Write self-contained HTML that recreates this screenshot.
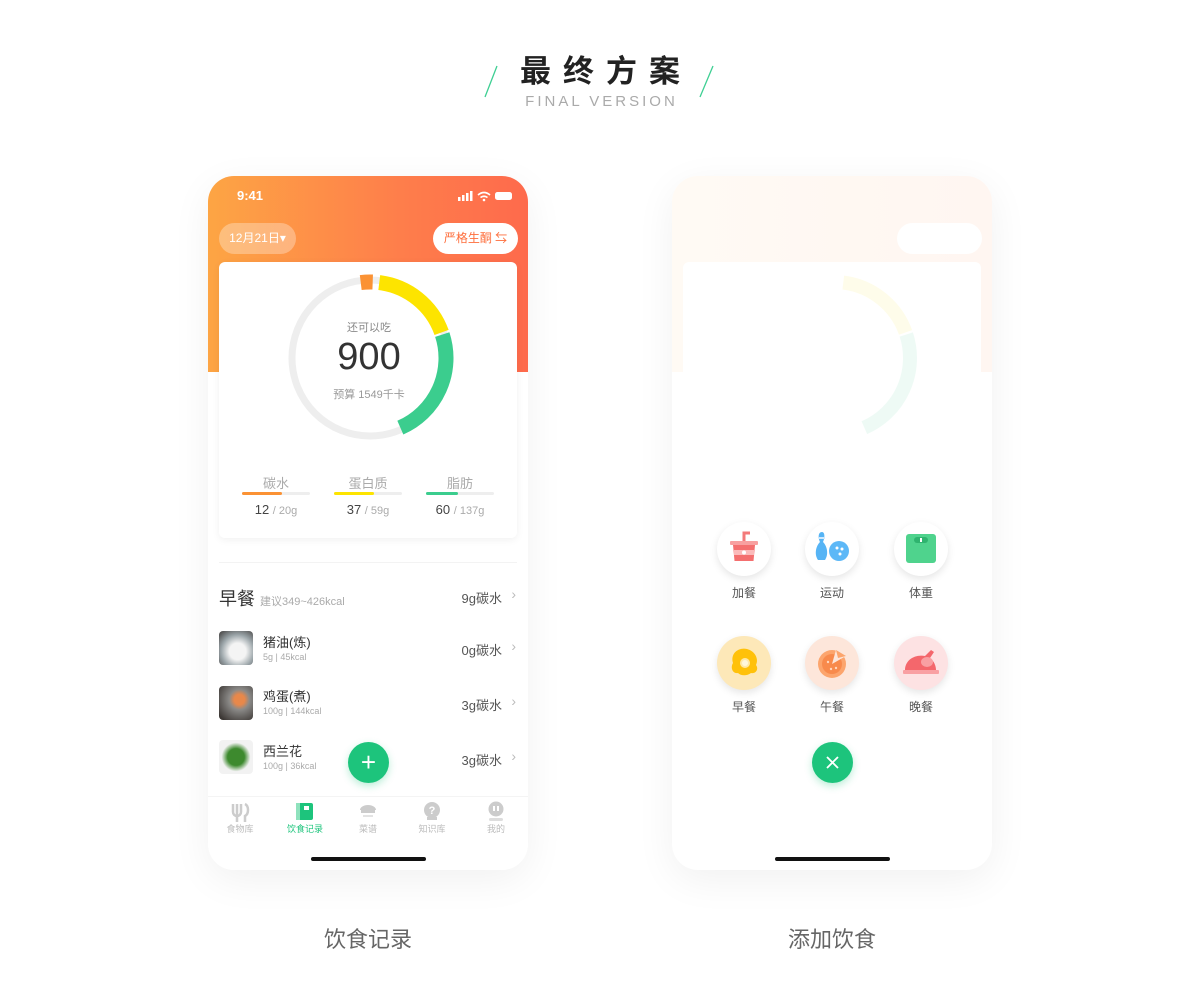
<!DOCTYPE html>
<html><head><meta charset="utf-8"><style>
*{margin:0;padding:0;box-sizing:border-box}
body{width:1200px;height:1002px;background:#fff;position:relative;overflow:hidden;font-family:"Liberation Sans","Noto Sans CJK SC",sans-serif;color:#333}
.abs{position:absolute}
.phone{position:absolute;width:320px;height:694px;border-radius:26px;background:#fff;overflow:hidden;box-shadow:0 10px 40px rgba(0,0,0,0.06)}
.t{position:absolute;white-space:nowrap}
.ic{position:absolute;width:54px;height:54px;border-radius:50%;box-shadow:0 3px 8px rgba(0,0,0,0.1)}
.lbl{position:absolute;font-size:12px;color:#555;width:60px;text-align:center}
</style></head><body>
<div class="t" style="left:0;width:1200px;text-align:center;top:46px;font-size:31px;font-weight:bold;letter-spacing:12px;color:#222;padding-left:12px">最终方案</div>
<div class="t" style="left:0;width:1200px;text-align:center;top:93px;font-size:15px;letter-spacing:3px;color:#aaa;padding-left:3px">FINAL VERSION</div>
<svg class="abs" style="left:480px;top:64px" width="240" height="36"><line x1="17" y1="2" x2="5" y2="33" stroke="#3ecf93" stroke-width="1.3"/><line x1="233" y1="2" x2="220" y2="33" stroke="#3ecf93" stroke-width="1.3"/></svg>

<!-- Phone 1 -->
<div class="phone" style="left:208px;top:176px">
  <div class="abs" style="left:0;top:0;width:320px;height:196px;background:linear-gradient(90deg,#fda544,#fe7e4b 60%,#fe6a4c)"></div>
  <div class="t" style="left:29px;top:12px;font-size:13px;color:#fff;font-weight:bold">9:41</div>
  <svg class="abs" style="left:250px;top:14px" width="58" height="12"><rect x="0" y="7" width="2.5" height="4" fill="#fff"/><rect x="4" y="5" width="2.5" height="6" fill="#fff"/><rect x="8" y="3" width="2.5" height="8" fill="#fff"/><rect x="12" y="1" width="2.5" height="10" fill="#fff"/><path d="M20 5 Q26 0 32 5 M22.5 7.5 Q26 5 29.5 7.5" stroke="#fff" stroke-width="1.6" fill="none"/><circle cx="26" cy="10" r="1.3" fill="#fff"/><rect x="37" y="2" width="17" height="8" rx="2.5" fill="#fff"/></svg>
  <div class="t" style="left:11px;top:47px;width:77px;height:31px;border-radius:16px;background:rgba(255,255,255,0.3);color:#fff;font-size:12px;line-height:31px;text-align:center">12月21日▾</div>
  <div class="t" style="left:225px;top:47px;width:85px;height:31px;border-radius:16px;background:#fff;color:#fe6e3c;font-size:12px;line-height:31px;text-align:center">严格生酮 ⇆</div>
  <div class="abs" style="left:-40px;top:190px;width:400px;height:60px;border-radius:50%;background:#fff"></div>
  <div class="abs" style="left:11px;top:86px;width:298px;height:276px;background:#fff;border-radius:6px;box-shadow:0 2px 8px rgba(0,0,0,0.06)"></div>
  <svg class="abs" style="left:76px;top:96px" width="172" height="172" viewBox="0 0 172 172">
    <circle cx="86" cy="86" r="78" fill="none" stroke="#eeeeee" stroke-width="7"/>
    <g transform="rotate(-90 86 86)" fill="none" stroke-width="15">
      <circle cx="86" cy="86" r="76" stroke="#fb9234" stroke-dasharray="12 500" transform="rotate(-7 86 86)"/>
      <circle cx="86" cy="86" r="76" stroke="#fde400" stroke-dasharray="84 500" transform="rotate(7 86 86)"/>
      <circle cx="86" cy="86" r="76" stroke="#3bcd8e" stroke-dasharray="112 500" transform="rotate(72 86 86)"/>
    </g>
  </svg>
  <div class="t" style="left:0;width:320px;top:143px;text-align:center;font-size:11px;color:#888;padding-left:2px">还可以吃</div>
  <div class="t" style="left:0;width:320px;top:160px;text-align:center;font-size:38px;color:#333;padding-left:2px">900</div>
  <div class="t" style="left:0;width:320px;top:210px;text-align:center;font-size:11px;color:#999;padding-left:2px">预算 1549千卡</div>
  <div class="t" style="left:34px;width:68px;top:297px;text-align:center;font-size:13px;color:#aaa">碳水</div>
  <div class="t" style="left:126px;width:68px;top:297px;text-align:center;font-size:13px;color:#aaa">蛋白质</div>
  <div class="t" style="left:218px;width:68px;top:297px;text-align:center;font-size:13px;color:#aaa">脂肪</div>
  <div class="abs" style="left:34px;top:316px;width:68px;height:3px;background:#eee;border-radius:2px"><div style="width:40px;height:3px;background:#fb9234;border-radius:2px"></div></div>
  <div class="abs" style="left:126px;top:316px;width:68px;height:3px;background:#eee;border-radius:2px"><div style="width:40px;height:3px;background:#fde400;border-radius:2px"></div></div>
  <div class="abs" style="left:218px;top:316px;width:68px;height:3px;background:#eee;border-radius:2px"><div style="width:32px;height:3px;background:#3bcd8e;border-radius:2px"></div></div>
  <div class="t" style="left:34px;width:68px;top:326px;text-align:center;font-size:13px;color:#444">12 <span style="color:#aaa;font-size:11px">/ 20g</span></div>
  <div class="t" style="left:126px;width:68px;top:326px;text-align:center;font-size:13px;color:#444">37 <span style="color:#aaa;font-size:11px">/ 59g</span></div>
  <div class="t" style="left:218px;width:68px;top:326px;text-align:center;font-size:13px;color:#444">60 <span style="color:#aaa;font-size:11px">/ 137g</span></div>
  <div class="abs" style="left:11px;top:386px;width:298px;height:1px;background:#f3f3f3"></div>
  <div class="t" style="left:11px;top:409px;font-size:18px;color:#333">早餐 <span style="font-size:11px;color:#aaa">建议349~426kcal</span></div>
  <div class="t" style="right:26px;top:412px;font-size:13px;color:#555">9g碳水</div>
  <div class="t" style="right:12px;top:410px;font-size:14px;color:#bbb">›</div>

  <div class="abs" style="left:11px;top:455px;width:34px;height:34px;border-radius:4px;background:radial-gradient(circle at 55% 60%,#f4f4f4 30%,#9aa4a8 60%,#555 90%)"></div>
  <div class="t" style="left:55px;top:456px;font-size:13px;color:#333">猪油(炼)</div>
  <div class="t" style="left:55px;top:476px;font-size:9px;color:#aaa">5g | 45kcal</div>
  <div class="t" style="right:26px;top:464px;font-size:13px;color:#555">0g碳水</div>
  <div class="t" style="right:12px;top:462px;font-size:14px;color:#bbb">›</div>

  <div class="abs" style="left:11px;top:510px;width:34px;height:34px;border-radius:4px;background:radial-gradient(circle at 60% 40%,#e8884a 18%,#8b8a88 35%,#3a3532 90%)"></div>
  <div class="t" style="left:55px;top:510px;font-size:13px;color:#333">鸡蛋(煮)</div>
  <div class="t" style="left:55px;top:530px;font-size:9px;color:#aaa">100g | 144kcal</div>
  <div class="t" style="right:26px;top:519px;font-size:13px;color:#555">3g碳水</div>
  <div class="t" style="right:12px;top:517px;font-size:14px;color:#bbb">›</div>

  <div class="abs" style="left:11px;top:564px;width:34px;height:34px;border-radius:4px;background:radial-gradient(circle at 50% 50%,#3d8a2e 35%,#f2f2f2 60%)"></div>
  <div class="t" style="left:55px;top:565px;font-size:13px;color:#333">西兰花</div>
  <div class="t" style="left:55px;top:585px;font-size:9px;color:#aaa">100g | 36kcal</div>
  <div class="t" style="right:26px;top:574px;font-size:13px;color:#555">3g碳水</div>
  <div class="t" style="right:12px;top:572px;font-size:14px;color:#bbb">›</div>

  <div class="abs" style="left:0;top:620px;width:320px;height:74px;background:#fff;border-top:1px solid #f4f4f4"></div>
  <div class="abs" style="left:140px;top:566px;width:41px;height:41px;border-radius:50%;background:#1dc47c;color:#fff;font-size:26px;line-height:40px;text-align:center;box-shadow:0 3px 8px rgba(29,196,124,0.3)">+</div>
  <svg class="abs" style="left:0;top:624px" width="320" height="40">
    <path d="M25 4v8a4 4 0 0 0 8 0V4M29 4v18M37 4c4 2 4 10 0 12v6" stroke="#ccc" stroke-width="2.5" fill="none"/>
    <rect x="88" y="3" width="17" height="17" rx="2" fill="#1dc47c"/><rect x="88" y="3" width="4" height="17" fill="#8fe2bd"/><rect x="96" y="6" width="5" height="4" fill="#fff"/>
    <path d="M152 10a8 5 0 0 1 16 0z M153 10h14v3h-14z" fill="#ccc"/><rect x="155" y="15" width="10" height="2" fill="#e3e3e3"/>
    <circle cx="224" cy="10" r="8" fill="#ccc"/><text x="224" y="14" font-size="11" fill="#fff" text-anchor="middle" font-family="Liberation Sans" font-weight="bold">?</text><rect x="219" y="17" width="10" height="3" fill="#ccc"/>
    <circle cx="288" cy="9" r="7.5" fill="#ccc"/><rect x="285" y="6" width="2" height="5" fill="#fff"/><rect x="289" y="6" width="2" height="5" fill="#fff"/><rect x="281" y="18" width="14" height="3" rx="1.5" fill="#ddd"/>
  </svg>
  <div class="t" style="left:12px;width:40px;text-align:center;top:646px;font-size:9px;color:#bbb">食物库</div>
  <div class="t" style="left:76px;width:42px;text-align:center;top:646px;font-size:9px;color:#1dc47c">饮食记录</div>
  <div class="t" style="left:140px;width:40px;text-align:center;top:646px;font-size:9px;color:#bbb">菜谱</div>
  <div class="t" style="left:204px;width:40px;text-align:center;top:646px;font-size:9px;color:#bbb">知识库</div>
  <div class="t" style="left:268px;width:40px;text-align:center;top:646px;font-size:9px;color:#bbb">我的</div>
  <div class="abs" style="left:103px;top:681px;width:115px;height:4px;border-radius:2px;background:#111"></div>
</div>

<!-- Phone 2 -->
<div class="phone" style="left:672px;top:176px">
  <div class="abs" style="left:0;top:0;width:320px;height:196px;background:linear-gradient(90deg,#fffaf4,#fff6f1)"></div>
  <div class="abs" style="left:225px;top:47px;width:85px;height:31px;border-radius:16px;background:#fff"></div>
  <div class="abs" style="left:11px;top:86px;width:298px;height:276px;background:#fff;border-radius:6px"></div>
  <svg class="abs" style="left:76px;top:96px" width="172" height="172" viewBox="0 0 172 172"><g transform="rotate(-90 86 86)" fill="none" stroke-width="14" opacity="0.08"><circle cx="86" cy="86" r="76" stroke="#fde400" stroke-dasharray="84 500" transform="rotate(7 86 86)"/><circle cx="86" cy="86" r="76" stroke="#3bcd8e" stroke-dasharray="112 500" transform="rotate(72 86 86)"/></g></svg>

  <div class="ic" style="left:45px;top:346px;background:#fff"></div>
  <svg class="abs" style="left:56px;top:353px" width="32" height="38"><path d="M16 12V4h6" stroke="#f37a7a" stroke-width="3" fill="none"/><rect x="2" y="12" width="28" height="4" rx="1" fill="#f8a0a0"/><path d="M5 16h22l-1.5 16h-19z" fill="#f46f6f"/><rect x="6" y="21" width="20" height="5" fill="#fbbaba"/><circle cx="16" cy="23.5" r="2" fill="#fff"/></svg>
  <div class="ic" style="left:133px;top:346px;background:#fff"></div>
  <svg class="abs" style="left:142px;top:352px" width="38" height="38"><path d="M8 4c3 0 3 6 1 10c4 4 6 12 2 18h-7c-4-6-2-14 2-18c-2-4-2-10 2-10z" fill="#56b4f5"/><rect x="5" y="9" width="6" height="2" fill="#cfe9fd"/><circle cx="25" cy="23" r="10" fill="#5db8f7"/><circle cx="23" cy="20" r="1.5" fill="#fff"/><circle cx="28" cy="21" r="1.5" fill="#fff"/><circle cx="26" cy="26" r="1.5" fill="#fff"/></svg>
  <div class="ic" style="left:222px;top:346px;background:#fff"></div>
  <svg class="abs" style="left:233px;top:357px" width="32" height="32"><rect x="1" y="1" width="30" height="29" rx="3" fill="#4fd38d"/><rect x="9" y="4" width="14" height="6" rx="3" fill="#2fb46f"/><rect x="15" y="5" width="2" height="4" fill="#fff"/></svg>
  <div class="lbl" style="left:42px;top:408px">加餐</div>
  <div class="lbl" style="left:130px;top:408px">运动</div>
  <div class="lbl" style="left:219px;top:408px">体重</div>

  <div class="ic" style="left:45px;top:460px;background:#fde8b8"></div>
  <svg class="abs" style="left:55px;top:469px" width="34" height="34"><path d="M6 18c-3-10 6-16 14-14c8 2 12 10 9 16c3 4 0 9-5 8c-4 3-10 3-13 0c-5 1-8-5-5-10z" fill="#ffc10a"/><circle cx="18" cy="18" r="5" fill="#ffe9a8"/><circle cx="18" cy="18" r="3" fill="#fff7dc"/></svg>
  <div class="ic" style="left:133px;top:460px;background:#fde6da"></div>
  <svg class="abs" style="left:144px;top:470px" width="34" height="34"><circle cx="16" cy="18" r="14" fill="#fca56d"/><circle cx="16" cy="18" r="10" fill="#f88a4c"/><path d="M16 18l4-14 10 6z" fill="#fde6da"/><path d="M20 4l10 6-8 2z" fill="#fca56d"/><circle cx="12" cy="16" r="1.2" fill="#ffd6bd"/><circle cx="15" cy="23" r="1.2" fill="#ffd6bd"/><circle cx="20" cy="22" r="1.2" fill="#ffd6bd"/></svg>
  <div class="ic" style="left:222px;top:460px;background:#fde2e3"></div>
  <svg class="abs" style="left:229px;top:470px" width="40" height="32"><path d="M4 24c0-10 10-16 20-14l6-6 3 2-4 6c4 3 6 8 6 12z" fill="#f4676c"/><ellipse cx="26" cy="16" rx="6" ry="5" fill="#f9a0a3"/><rect x="2" y="24" width="36" height="4" rx="1" fill="#f9a0a3"/></svg>
  <div class="lbl" style="left:42px;top:522px">早餐</div>
  <div class="lbl" style="left:130px;top:522px">午餐</div>
  <div class="lbl" style="left:219px;top:522px">晚餐</div>

  <div class="abs" style="left:140px;top:566px;width:41px;height:41px;border-radius:50%;background:#1dc47c;box-shadow:0 3px 8px rgba(29,196,124,0.3)"></div>
  <svg class="abs" style="left:152px;top:578px" width="17" height="17"><path d="M3 3l11 11M14 3L3 14" stroke="#fff" stroke-width="1.8"/></svg>
  <div class="abs" style="left:103px;top:681px;width:115px;height:4px;border-radius:2px;background:#111"></div>
</div>

<div class="t" style="left:268px;width:200px;text-align:center;top:922px;font-size:22px;color:#666">饮食记录</div>
<div class="t" style="left:732px;width:200px;text-align:center;top:922px;font-size:22px;color:#666">添加饮食</div>
</body></html>
